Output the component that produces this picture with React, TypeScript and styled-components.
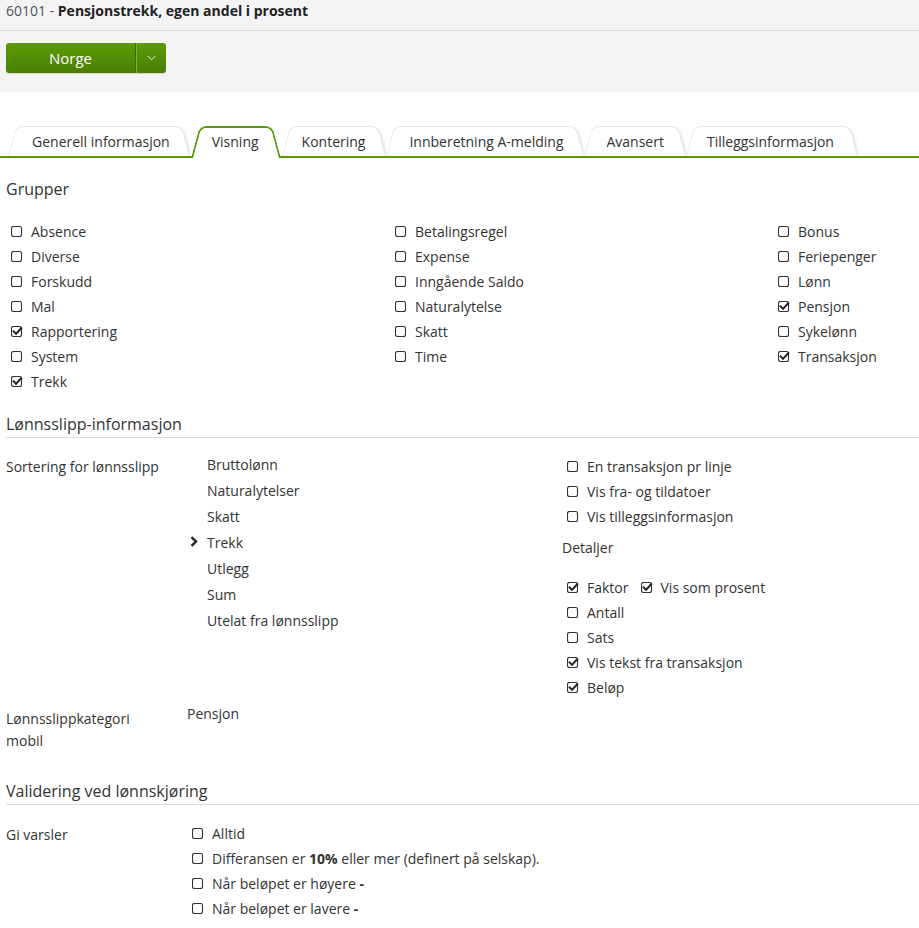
import styled, { createGlobalStyle } from "styled-components";

const GlobalStyle = createGlobalStyle`
  body {
    margin: 0;
    background: #fff;
    font-family: "Open Sans", "DejaVu Sans", sans-serif;
    font-size: 14px;
    color: #333;
  }
`;

const GREEN = "#5a9a0a";

const TopArea = styled.div`
  background: #f4f4f4;
  height: 92px;
`;

const TitleBar = styled.div`
  height: 31px;
  box-sizing: border-box;
  border-bottom: 1px solid #d9d9d9;
  padding: 1px 6px 0;
  line-height: 20px;
  color: #4d5560;
`;

const TitleName = styled.b`
  color: #222;
  font-weight: 700;
`;

const ButtonRow = styled.div`
  padding: 12px 6px 0;
`;

const SplitButton = styled.div`
  display: inline-flex;
  height: 30px;
  border-radius: 3px;
  background: linear-gradient(#5c9b08, #4b7f05);
  box-shadow: 0 1px 1px rgba(0, 0, 0, 0.15);
  color: #fff;
`;

const MainPart = styled.div`
  width: 129px;
  display: flex;
  align-items: center;
  justify-content: center;
  font-size: 15px;
  border-right: 1px solid #3f6a04;
  box-shadow: 1px 0 0 #7fb43a;
`;

const CaretPart = styled.div`
  width: 30px;
  display: flex;
  align-items: center;
  justify-content: center;
`;

const TabBar = styled.div`
  display: flex;
  margin-top: 34px;
  padding-left: 8px;
  border-bottom: 2px solid ${GREEN};
`;

const Tab = styled.div<{ $active?: boolean; $pl: number; $pr: number }>`
  position: relative;
  z-index: ${(p) => (p.$active ? 2 : 1)};
  height: 30px;
  line-height: 31px;
  padding: 0 ${(p) => p.$pr}px 0 ${(p) => p.$pl}px;
  margin-bottom: ${(p) => (p.$active ? "-2px" : "0")};
  padding-bottom: ${(p) => (p.$active ? "2px" : "0")};
  color: #333;
  white-space: nowrap;

  &::before,
  &::after {
    content: "";
    position: absolute;
    top: 0;
    bottom: 0;
    width: 50%;
    z-index: -1;
    background: #fff;
    border: ${(p) => (p.$active ? `2px solid ${GREEN}` : "1px solid #e2e8ee")};
    border-bottom: none;
  }
  &::before {
    left: 0;
    border-right: none;
    border-radius: 7px 0 0 0;
    transform-origin: bottom left;
    transform: skewX(-15deg);
  }
  &::after {
    right: 0;
    border-left: none;
    border-radius: 0 7px 0 0;
    transform-origin: bottom right;
    transform: skewX(15deg);
    box-shadow: ${(p) => (p.$active ? "none" : "3px 0 3px -2px rgba(0,0,0,0.12)")};
  }
`;

const Content = styled.div`
  padding: 0 0 20px 6px;
`;

const Heading = styled.div<{ $line?: boolean; $top: number }>`
  margin-top: ${(p) => p.$top}px;
  font-size: 16px;
  line-height: 22px;
  padding-bottom: 2px;
  border-bottom: 1px solid ${(p) => (p.$line ? "#dcdcdc" : "transparent")};
`;

const GroupGrid = styled.div`
  display: grid;
  grid-template-columns: 384px 383px 1fr;
  margin-top: 16px;
`;

const CheckRow = styled.div`
  display: flex;
  align-items: center;
  height: 25px;
  padding-left: 5px;
  white-space: nowrap;
`;

const CheckLabel = styled.span`
  margin-left: 8px;
  margin-right: 12px;
`;

const FormRow = styled.div<{ $top: number }>`
  display: grid;
  grid-template-columns: 181px 375px 1fr;
  margin-top: ${(p) => p.$top}px;
`;

const FormLabel = styled.div<{ $pad?: number }>`
  padding-top: ${(p) => p.$pad ?? 4}px;
  line-height: 22px;
  padding-right: 20px;
`;

const SortList = styled.div`
  padding-left: 20px;
`;

const SortItem = styled.div`
  position: relative;
  height: 26px;
  line-height: 26px;
`;

const Chevron = styled.svg`
  position: absolute;
  left: -17px;
  top: 6px;
`;

const SideColumn = styled.div`
  padding-top: 2px;
`;

const SubHeading = styled.div`
  margin-top: 8px;
  margin-bottom: 16px;
  line-height: 22px;
`;

const Value = styled.div`
  line-height: 22px;
`;

const ChecksColumn = styled.div`
  grid-column: span 2;
`;

function Box({ checked }: { checked?: boolean }) {
  return (
    <svg width="12" height="12" viewBox="0 0 12 12">
      <rect x="0.5" y="0.5" width="10" height="10" rx="2" fill="#fff" stroke="#333" strokeWidth="1.1" />
      {checked && (
        <path d="M2.6 5.4 L5 7.9 L10.2 2.2" fill="none" stroke="#222" strokeWidth="2" strokeLinecap="square" />
      )}
    </svg>
  );
}

function Check({ label, checked }: { label: React.ReactNode; checked?: boolean }) {
  return (
    <CheckRow>
      <Box checked={checked} />
      <CheckLabel>{label}</CheckLabel>
    </CheckRow>
  );
}

const groups: [string, boolean][][] = [
  [
    ["Absence", false],
    ["Diverse", false],
    ["Forskudd", false],
    ["Mal", false],
    ["Rapportering", true],
    ["System", false],
    ["Trekk", true],
  ],
  [
    ["Betalingsregel", false],
    ["Expense", false],
    ["Inngående Saldo", false],
    ["Naturalytelse", false],
    ["Skatt", false],
    ["Time", false],
  ],
  [
    ["Bonus", false],
    ["Feriepenger", false],
    ["Lønn", false],
    ["Pensjon", true],
    ["Sykelønn", false],
    ["Transaksjon", true],
  ],
];

const tabs: [string, number, number][] = [
  ["Generell informasjon", 24, 21],
  ["Visning", 21, 23],
  ["Kontering", 20, 21],
  ["Innberetning A-melding", 23, 21],
  ["Avansert", 22, 22],
  ["Tilleggsinformasjon", 21, 24],
];

const sortItems = ["Bruttolønn", "Naturalytelser", "Skatt", "Trekk", "Utlegg", "Sum", "Utelat fra lønnsslipp"];

export default function App() {
  return (
    <>
      <GlobalStyle />
      <TopArea>
        <TitleBar>
          60101 - <TitleName>Pensjonstrekk, egen andel i prosent</TitleName>
        </TitleBar>
        <ButtonRow>
          <SplitButton>
            <MainPart>Norge</MainPart>
            <CaretPart>
              <svg width="9" height="6" viewBox="0 0 9 6">
                <path d="M0.5 0.8 L4.5 4.8 L8.5 0.8" fill="none" stroke="#e8f2dc" strokeWidth="1" />
              </svg>
            </CaretPart>
          </SplitButton>
        </ButtonRow>
      </TopArea>

      <TabBar>
        {tabs.map(([t, pl, pr]) => (
          <Tab key={t} $active={t === "Visning"} $pl={pl} $pr={pr}>
            {t}
          </Tab>
        ))}
      </TabBar>

      <Content>
        <Heading $top={20}>Grupper</Heading>
        <GroupGrid>
          {groups.map((col, i) => (
            <div key={i}>
              {col.map(([l, c]) => (
                <Check key={l} label={l} checked={c} />
              ))}
            </div>
          ))}
        </GroupGrid>

        <Heading $line $top={19}>Lønnsslipp-informasjon</Heading>
        <FormRow $top={14}>
          <FormLabel>Sortering for lønnsslipp</FormLabel>
          <SortList>
            {sortItems.map((s) => (
              <SortItem key={s}>
                {s === "Trekk" && (
                  <Chevron width="8" height="11" viewBox="0 0 8 11">
                    <path d="M1.5 1.2 L6 5.5 L1.5 9.8" fill="none" stroke="#222" strokeWidth="2.4" />
                  </Chevron>
                )}
                {s}
              </SortItem>
            ))}
          </SortList>
          <SideColumn>
            <Check label="En transaksjon pr linje" />
            <Check label="Vis fra- og tildatoer" />
            <Check label="Vis tilleggsinformasjon" />
            <SubHeading>Detaljer</SubHeading>
            <CheckRow>
              <Box checked />
              <CheckLabel>Faktor</CheckLabel>
              <Box checked />
              <CheckLabel>Vis som prosent</CheckLabel>
            </CheckRow>
            <Check label="Antall" />
            <Check label="Sats" />
            <Check label="Vis tekst fra transaksjon" checked />
            <Check label="Beløp" checked />
          </SideColumn>
        </FormRow>

        <FormRow $top={3}>
          <FormLabel $pad={5}>Lønnsslippkategori mobil</FormLabel>
          <Value>Pensjon</Value>
        </FormRow>

        <Heading $line $top={28}>Validering ved lønnskjøring</Heading>
        <FormRow $top={16}>
          <FormLabel $pad={3}>Gi varsler</FormLabel>
          <ChecksColumn>
            <Check label="Alltid" />
            <Check
              label={
                <>
                  Differansen er <b>10%</b> eller mer (definert på selskap).
                </>
              }
            />
            <Check label={<>Når beløpet er høyere <b>-</b></>} />
            <Check label={<>Når beløpet er lavere <b>-</b></>} />
          </ChecksColumn>
        </FormRow>
      </Content>
    </>
  );
}
